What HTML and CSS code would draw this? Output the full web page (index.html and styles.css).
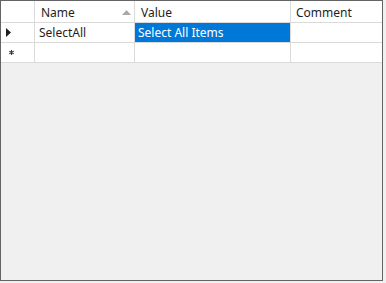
FILE: index.html
```html
<!DOCTYPE html>
<html lang="en">
<head>
    <meta charset="UTF-8">
    <title>Grid</title>
    <link rel="stylesheet" href="styles.css">
</head>
<body>
    <div class="grid">
        <div class="cell head corner"></div>
        <div class="cell head sortable">
            <span>Name</span>
            <svg class="sort" width="9" height="5" viewBox="0 0 9 5"><polygon points="0,5 4.5,0 9,5" fill="#a8a8a8"/></svg>
        </div>
        <div class="cell head">Value</div>
        <div class="cell head last">Comment</div>

        <div class="cell rowhead">
            <svg width="5" height="9" viewBox="0 0 5 9"><polygon points="0,0 5,4.5 0,9" fill="#1e1e1e"/></svg>
        </div>
        <div class="cell">SelectAll</div>
        <div class="cell selected">Select All Items</div>
        <div class="cell last"></div>

        <div class="cell rowhead">
            <svg class="star" width="5" height="5" viewBox="0 0 5 5">
                <path d="M2.5 0V5M0.3 1.3L4.7 3.7M0.3 3.7L4.7 1.3" stroke="#333" stroke-width="1.1"/>
            </svg>
        </div>
        <div class="cell"></div>
        <div class="cell"></div>
        <div class="cell last"></div>
    </div>
</body>
</html>
```

FILE: styles.css
```css
html, body {
    margin: 0;
    padding: 0;
    background-color: #f0f0f0;
}

.grid {
    box-sizing: border-box;
    width: 383px;
    height: 281px;
    border: 1px solid #646464;
    background-color: #f0f0f0;
    display: grid;
    grid-template-columns: 34px 100px 156px 91px;
    grid-template-rows: 22px 20px 20px;
    align-content: start;
    font-family: "Noto Sans", "Open Sans", sans-serif;
    font-size: 12px;
    color: #1e1e1e;
}

.cell {
    box-sizing: border-box;
    background: white;
    border-right: 1px solid #dadada;
    border-bottom: 1px solid #dadada;
    padding: 0 3px 0 4px;
    display: flex;
    align-items: center;
    white-space: nowrap;
    overflow: hidden;
}

.cell.last {
    border-right: none;
}

.head {
    padding-left: 6px;
    padding-top: 2px;
}

.head.last {
    padding-left: 5px;
}

.sortable {
    justify-content: space-between;
    padding-right: 3px;
}

.sort {
    margin-top: -1px;
}

.rowhead {
    padding-left: 5px;
}

.rowhead .star {
    margin-left: 3px;
}

.selected {
    background: #0078d7;
    color: white;
    padding-left: 3px;
}
```
